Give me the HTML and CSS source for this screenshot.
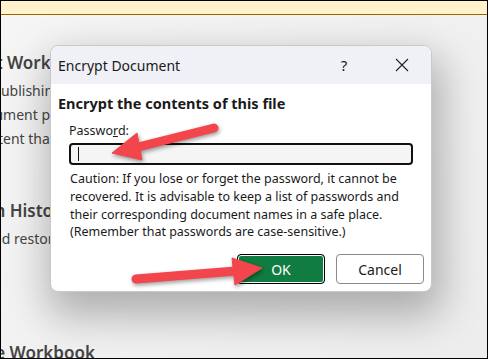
FILE: index.html
```html
<!DOCTYPE html>
<html>
<head>
<meta charset="utf-8">
<link rel="stylesheet" href="styles.css">
</head>
<body>
<div class="frame">
  <div class="banner"></div>
  <div class="page">
    <div class="page-col">
      <div class="sec-title t1">Inspect Workbook</div>
      <div class="sec-line l1">Before publishing this file, be aware</div>
      <div class="sec-line l2">Document properties, printer path</div>
      <div class="sec-line l3">Content that people with disabilities</div>
      <div class="sec-title t2">Version History</div>
      <div class="sec-line l4">View and restore previous versions.</div>
      <div class="sec-title t3">Manage Workbook</div>
    </div>
  </div>

  <div class="dialog">
    <div class="titlebar">
      <span class="title">Encrypt Document</span>
      <span class="tb-btn help">?</span>
      <span class="tb-btn close">
        <svg width="14" height="14" viewBox="0 0 14 14"><path d="M1 1 L13 13 M13 1 L1 13" stroke="#222" stroke-width="1.1" fill="none"/></svg>
      </span>
    </div>
    <div class="body">
      <div class="heading">Encrypt the contents of this file</div>
      <div class="field">
        <label class="label">Passwo<u>r</u>d:</label>
        <div class="input"><span class="caret"></span></div>
      </div>
      <p class="caution">Caution: If you lose or forget the password, it cannot be<br>recovered. It is advisable to keep a list of passwords and<br>their corresponding document names in a safe place.<br>(Remember that passwords are case-sensitive.)</p>
      <div class="buttons">
        <button class="btn ok">OK</button>
        <button class="btn cancel">Cancel</button>
      </div>
    </div>
  </div>

  <svg class="arrows" width="488" height="359" viewBox="0 0 488 359">
    <g fill="#f2454c" stroke="#f2454c">
      <line x1="214" y1="128" x2="138" y2="147" stroke-width="9" stroke-linecap="round"/>
      <polygon points="112,153 137,133 142,160" stroke-width="1" stroke-linejoin="round"/>
      <line x1="136" y1="279" x2="236" y2="271" stroke-width="9" stroke-linecap="round"/>
      <polygon points="262,268 232,258 235,285" stroke-width="1" stroke-linejoin="round"/>
    </g>
  </svg>
</div>
</body>
</html>
```

FILE: styles.css
```css
* { box-sizing: border-box; }
html, body { margin: 0; padding: 0; }
body {
  font-family: "Noto Sans", "Open Sans", sans-serif;
  background: #fff;
}
.frame {
  position: relative;
  width: 488px;
  height: 359px;
  border: 1px solid #000;
  overflow: hidden;
  background: #f4f4f4;
  display: flex;
  flex-direction: column;
}
.banner {
  height: 14px;
  flex: none;
  background: #fff2cc;
  border-bottom: 1px solid #9c6500;
}
.page {
  flex: 1;
  overflow: hidden;
  background: linear-gradient(135deg, #f5f5f5 0%, #ededed 100%);
}
.page-col {
  padding-top: 36px;
  color: #444;
  white-space: nowrap;
}
.sec-title {
  font-weight: 600;
  font-size: 17px;
  line-height: 24px;
}
.sec-line {
  font-size: 14px;
  line-height: 24px;
}
.t1 { margin-left: -60px; }
.l1 { margin-left: -56px; margin-top: 4px; }
.l2 { margin-left: -32px; }
.l3 { margin-left: -29px; }
.t2 { margin-top: 48px; margin-left: -58px; }
.l4 { margin-left: -50px; margin-top: 4px; }
.t3 { margin-top: 90px; margin-left: -63px; }

.dialog {
  position: absolute;
  left: 49px;
  top: 44px;
  width: 382px;
  height: 247px;
  background: #fff;
  border: 1px solid #c9c9c9;
  border-radius: 8px;
  overflow: hidden;
  box-shadow: 4px 18px 40px 6px rgba(0, 0, 0, 0.28);
  display: flex;
  flex-direction: column;
  color: #1a1a1a;
}
.titlebar {
  height: 38px;
  flex: none;
  background: #eff1f6;
  display: flex;
  align-items: center;
  padding-left: 7px;
}
.title {
  font-size: 14px;
  flex: 1;
}
.tb-btn {
  width: 58px;
  display: flex;
  justify-content: center;
  align-items: center;
  font-size: 15px;
}
.close { width: 58px; }
.body {
  flex: 1;
  padding: 10px 7px 0 7px;
  display: flex;
  flex-direction: column;
}
.heading {
  font-weight: 700;
  font-size: 14.5px;
  line-height: 19px;
}
.field {
  padding-left: 11px;
  margin-top: 9px;
  padding-right: 11px;
}
.label {
  display: block;
  font-size: 12.5px;
  line-height: 17px;
}
.input {
  margin-top: 4px;
  height: 22px;
  border: 2px solid #111;
  border-radius: 4px;
  background: #f5f5f5;
  display: flex;
  align-items: center;
  padding-left: 7px;
}
.caret {
  width: 1px;
  height: 14px;
  background: #111;
}
.caution {
  margin: 5px 0 0 12px;
  font-size: 12.5px;
  line-height: 17.8px;
  white-space: nowrap;
}
.buttons {
  margin-top: auto;
  margin-bottom: 7px;
  display: flex;
  justify-content: flex-end;
  gap: 11px;
}
.btn {
  width: 88px;
  height: 30px;
  border-radius: 4px;
  font-family: inherit;
  font-size: 14px;
  padding: 0;
}
.ok {
  background: #107c41;
  color: #fff;
  border: 1px solid #000;
  box-shadow: inset 0 0 0 1px #fff;
}
.cancel {
  background: #fff;
  color: #1a1a1a;
  border: 1px solid #8a8a8a;
}
.arrows {
  position: absolute;
  left: -1px;
  top: -1px;
  filter: drop-shadow(1px 2px 2px rgba(0, 0, 0, 0.4));
}
```
